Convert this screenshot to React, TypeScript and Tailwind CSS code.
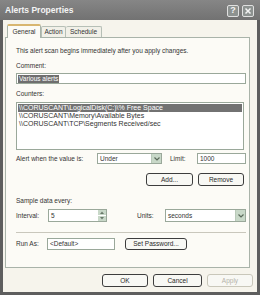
import React from "react";

const F = { fontFamily: '"Liberation Sans", Arial, sans-serif' };

function Btn({ children, w, h = "h-[13px]", disabled }: { children: React.ReactNode; w: string; h?: string; disabled?: boolean }) {
  return (
    <div
      className={`${w} ${h} flex items-center justify-center rounded-[3px] border ${
        disabled ? "border-[#c9c7ba] text-[#b5b3a8]" : "border-[#3d3d3d] text-[#2a2a2a]"
      } bg-[#f8f8f4]`}
    >
      {children}
    </div>
  );
}

function Arrow() {
  return (
    <div className="w-[10px] h-full bg-[#c8d8c8] border-l border-[#b9c9b9] flex items-center justify-center">
      <svg width="6" height="4" viewBox="0 0 6 4">
        <path d="M0.5 0.5 L3 3 L5.5 0.5" stroke="#5a6a5a" strokeWidth="1.2" fill="none" />
      </svg>
    </div>
  );
}

export default function App() {
  return (
    <div style={F} className="w-[260px] h-[295px] flex flex-col bg-[#5e5e5e] text-[6.5px] leading-[8px] text-[#333] overflow-hidden">
      <div className="h-[20px] shrink-0 flex items-center justify-between pl-[5px] pr-[6px] bg-gradient-to-b from-[#868686] to-[#727272]">
        <span className="text-[#f4f4f4] text-[8.5px] leading-[10px] font-bold">Alerts Properties</span>
        <div className="flex gap-[3px] pt-[1px]">
          <div className="w-[12px] h-[12px] rounded-[2px] border border-[#e0e0e0] bg-[#8d9290] text-[#f4f4f4] flex items-center justify-center text-[9px] leading-[9px] font-bold">?</div>
          <div className="w-[12px] h-[12px] rounded-[2px] border border-[#e0e0e0] bg-[#8d9290] flex items-center justify-center">
            <svg width="8" height="8" viewBox="0 0 8 8">
              <path d="M1.5 1.5 L6.5 6.5 M6.5 1.5 L1.5 6.5" stroke="#f4f4f4" strokeWidth="1.5" />
            </svg>
          </div>
        </div>
      </div>
      <div className="flex-1 mx-[3px] mb-[3px] bg-[#f6f4ec] flex flex-col pl-[2px] pr-[4px] pt-[3px]">
        <div className="flex items-end h-[14px] pl-[2px]">
          <div className="w-[34px] h-[14px] flex items-center justify-center bg-[#fcfbf6] border border-b-0 border-[#a9b3a9] rounded-t-[2px] border-t-[2px] border-t-[#d8b670] relative z-10 -mb-px">General</div>
          <div className="w-[25px] h-[11px] flex items-center justify-center bg-[#f1f0e8] border border-b-0 border-[#b6bfb6] rounded-t-[2px]">Action</div>
          <div className="w-[36px] h-[11px] flex items-center justify-center bg-[#f1f0e8] border border-b-0 border-l-0 border-[#b6bfb6] rounded-t-[2px]">Schedule</div>
        </div>
        <div className="w-[245px] h-[231px] border border-[#a9b3a9] bg-[#fcfbf6] pl-[10px] pr-[3px] pt-[9px] flex flex-col">
          <div>This alert scan begins immediately after you apply changes.</div>
          <div className="mt-[7px]">Comment:</div>
          <div className="mt-[3px] h-[11px] border border-[#9aa89a] bg-white flex items-center px-[1px]">
            <span className="bg-[#6e6e6e] text-white px-[1px]">Various alerts</span>
          </div>
          <div className="mt-[6px]">Counters:</div>
          <div className="mt-[4px] h-[48px] w-[228px] border border-[#9aa89a] bg-white p-[1px] text-[7px] leading-[8px]">
            <div className="bg-[#727272] text-white px-[1px]">\\CORUSCANT\LogicalDisk(C:)\% Free Space</div>
            <div className="px-[1px]">\\CORUSCANT\Memory\Available Bytes</div>
            <div className="px-[1px]">\\CORUSCANT\TCP\Segments Received/sec</div>
          </div>
          <div className="mt-[3px] flex items-center h-[11px]">
            <span className="w-[81px]">Alert when the value is:</span>
            <div className="w-[65px] h-[11px] border border-[#9aa89a] bg-white flex items-center">
              <span className="flex-1 px-[2px]">Under</span>
              <Arrow />
            </div>
            <span className="ml-[8px] w-[27px]">Limit:</span>
            <div className="flex-1 h-[11px] border border-[#9aa89a] bg-white flex items-center px-[2px]">1000</div>
          </div>
          <div className="mt-[9px] flex justify-end gap-[5px] pr-[2px]">
            <Btn w="w-[47px]">Add...</Btn>
            <Btn w="w-[46px]">Remove</Btn>
          </div>
          <div className="mt-[11px]">Sample data every:</div>
          <div className="mt-[4px] flex items-center h-[13px]">
            <span className="w-[32px]">Interval:</span>
            <div className="w-[59px] h-[13px] border border-[#9aa89a] bg-white flex items-center">
              <span className="flex-1 px-[2px]">5</span>
              <div className="w-[8px] h-full flex flex-col bg-[#c8d8c8]">
                <div className="flex-1 flex items-center justify-center border-b border-white">
                  <svg width="4" height="3" viewBox="0 0 4 3"><path d="M0 3 L2 0.5 L4 3Z" fill="#6a7a6a" /></svg>
                </div>
                <div className="flex-1 flex items-center justify-center">
                  <svg width="4" height="3" viewBox="0 0 4 3"><path d="M0 0 L2 2.5 L4 0Z" fill="#6a7a6a" /></svg>
                </div>
              </div>
            </div>
            <span className="ml-[30px] w-[28px]">Units:</span>
            <div className="flex-1 h-[13px] border border-[#9aa89a] bg-white flex items-center">
              <span className="flex-1 px-[2px]">seconds</span>
              <Arrow />
            </div>
          </div>
          <div className="mt-[10px] h-px bg-[#c9c7bc]" />
          <div className="mt-[5px] flex items-center h-[12px]">
            <span className="w-[31px]">Run As:</span>
            <div className="w-[68px] h-[12px] border border-[#9aa89a] bg-white flex items-center px-[2px]">&lt;Default&gt;</div>
            <div className="ml-[10px]"><Btn w="w-[62px]" h="h-[12px]">Set Password...</Btn></div>
          </div>
        </div>
        <div className="mt-[6px] flex justify-end gap-[5px]">
          <Btn w="w-[46px]">OK</Btn>
          <Btn w="w-[49px]">Cancel</Btn>
          <Btn w="w-[46px]" disabled>Apply</Btn>
        </div>
      </div>
    </div>
  );
}
